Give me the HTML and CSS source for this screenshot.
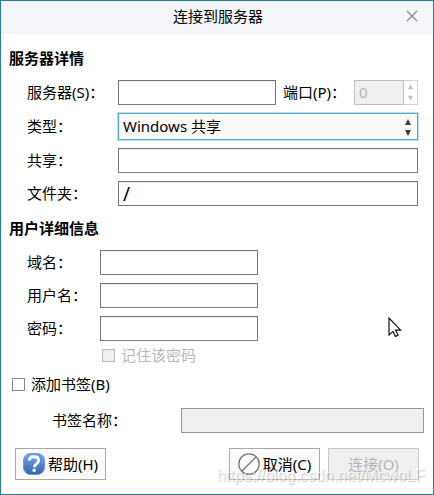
FILE: index.html
```html
<!DOCTYPE html>
<html lang="zh-CN">
<head>
    <meta charset="UTF-8">
    <meta name="viewport" content="width=device-width, initial-scale=1">
    <title>连接到服务器</title>
    <link rel="stylesheet" href="styles.css">
</head>
<body>
<form class="dialog">
    <header class="titlebar">
        <h1>连接到服务器</h1>
        <button class="close" type="button" aria-label="关闭">
            <svg width="12" height="12" viewBox="0 0 12 12"><path d="M1 1l10 10M11 1L1 11" stroke="#858585" stroke-width="1.1"/></svg>
        </button>
    </header>

    <main class="content">
        <h2>服务器详情</h2>
        <div class="fields server">
            <label for="server">服务器(S)：</label>
            <div class="server-row">
                <input class="text" id="server" type="text">
                <label for="port">端口(P)：</label>
                <div class="spin">
                    <input id="port" type="number" value="0" disabled>
                    <svg width="14" height="23" viewBox="0 0 14 23" fill="#c4c4c4"><path d="M7 3l3 5H4zM7 20l3-5H4z"/></svg>
                </div>
            </div>
            <label for="type">类型：</label>
            <div class="select">
                <select id="type">
                    <option>Windows 共享</option>
                </select>
                <svg class="arrows" width="8" height="17" viewBox="0 0 8 17" fill="#3c3c3c"><path d="M4 0l3 6H1zM4 17l3-6H1z"/></svg>
            </div>
            <label for="share">共享：</label>
            <input class="text" id="share" type="text">
            <label for="folder">文件夹：</label>
            <input class="text path" id="folder" type="text" value="/">
        </div>

        <h2>用户详细信息</h2>
        <div class="fields user">
            <label for="domain">域名：</label>
            <input class="text" id="domain" type="text">
            <label for="username">用户名：</label>
            <input class="text" id="username" type="text">
            <label for="password">密码：</label>
            <input class="text" id="password" type="password">
        </div>
        <label class="check remember"><input type="checkbox" disabled>记住该密码</label>

        <label class="check bookmark"><input type="checkbox">添加书签(B)</label>
        <div class="bookmark-name">
            <label for="bookmark">书签名称：</label>
            <input class="text" id="bookmark" type="text" disabled>
        </div>
    </main>

    <footer class="buttons">
        <button class="btn help" type="button">
            <svg width="22" height="22" viewBox="0 0 22 22">
                <defs>
                    <linearGradient id="blue" x1="0" y1="0" x2="0" y2="1">
                        <stop offset="0" stop-color="#76a5ec"/>
                        <stop offset="1" stop-color="#3467a8"/>
                    </linearGradient>
                </defs>
                <rect x=".5" y=".5" width="21" height="21" rx="7" fill="url(#blue)" stroke="#6f9ad6"/>
                <path d="M6.2 7.6C6.4 5 8.4 3.8 10.9 3.8c2.8 0 4.7 1.4 4.7 3.7 0 3.4-4.2 3.3-4.2 6.7" fill="none" stroke="#fff" stroke-width="2.9"/>
                <circle cx="11.2" cy="17.3" r="1.8" fill="#fff"/>
            </svg>
            帮助(H)
        </button>
        <button class="btn" type="button">
            <svg width="22" height="22" viewBox="0 0 22 22" fill="none" stroke="#777" stroke-width="1.3"><circle cx="11" cy="11" r="10.2"/><path d="M3.8 18.2L18.2 3.8"/></svg>
            取消(C)
        </button>
        <button class="btn" type="submit" disabled>连接(O)</button>
    </footer>

    <svg class="pointer" width="14" height="21" viewBox="0 0 14 21"><path d="M1 1v17l4-3.6 2.4 5 2.6-1.2-2.3-5h5z" fill="#fff" stroke="#111" stroke-width="1.2"/></svg>
    <span class="watermark">https://blog.csdn.net/McwoLF</span>
</form>
</body>
</html>
```
FILE: styles.css
```css
* {
    box-sizing: border-box;
}
body {
    margin: 0;
    background: #fff;
    color: #000;
}
body, input, select, button {
    font-family: "Noto Sans", "Noto Sans CJK SC", sans-serif;
    font-size: 15px;
    line-height: 22px;
}
.dialog {
    position: relative;
    min-height: 100vh;
    border: 1px solid #2a7a9b;
}

/* title bar */
.titlebar {
    display: grid;
    grid-template-columns: 44px 1fr 42px;
    align-items: center;
    height: 33px;
    background: #f4f5f8;
}
h1 {
    grid-column: 2;
    margin: 0;
    padding-bottom: 4px;
    font-size: 15px;
    font-weight: normal;
    text-align: center;
}
.close {
    display: flex;
    justify-content: center;
    padding: 2px 4px 6px;
    border: 0;
    background: none;
}

/* form */
.content {
    padding: 13px 9px 0 8px;
}
h2 {
    margin: 0 0 11px;
    font-size: 15px;
    font-weight: bold;
    line-height: 22px;
}
.fields {
    display: grid;
    gap: 8px 0;
    align-items: center;
    padding-left: 18px;
}
.fields label, .bookmark-name label {
    padding-bottom: 2px;
}
.server {
    grid-template-columns: 91px 1fr;
    margin-bottom: 11px;
    padding-right: 6px;
}
.user {
    grid-template-columns: 73px 158px;
}
.server-row {
    display: flex;
    align-items: center;
}
.server-row .text {
    flex: 1;
}
.server-row label {
    width: 78px;
    padding-left: 7px;
    white-space: nowrap;
}
.text {
    width: 100%;
    min-width: 0;
    height: 25px;
    padding: 0 4px;
    border: 1px solid #777;
    border-radius: 0;
    background: #fff;
    box-shadow: inset 0 1px #ececec;
}
.text:disabled {
    border-color: #999;
    background: #efefef;
    box-shadow: none;
}
.path {
    font-size: 19px;
}
.spin {
    display: flex;
    width: 64px;
    height: 25px;
    border: 1px solid #d2d2d2;
}
.spin input {
    width: 50px;
    margin: -1px 0 -1px -1px;
    padding: 0 4px 2px;
    border: 1px solid #c0c0c0;
    background: #efefef;
    color: #b8b8b8;
    appearance: textfield;
}
.select {
    position: relative;
}
.select select {
    display: block;
    width: 100%;
    height: 27px;
    padding: 0 4px 2px;
    border: 1px solid #4eacd0;
    border-radius: 0;
    background: #fafafa;
    box-shadow: 0 0 0 1px #b9dfec;
    color: #000;
    appearance: none;
}
.arrows {
    position: absolute;
    top: 6px;
    right: 6px;
    pointer-events: none;
}

/* check boxes */
.check {
    display: flex;
    align-items: center;
    gap: 6px;
}
.check input {
    width: 13px;
    height: 13px;
    margin: 0;
    border: 1px solid #888;
    background: #fff;
    appearance: none;
}
.check input:checked {
    background: #4eacd0;
}
.check input:disabled {
    border-color: #bbb;
    background: #efefef;
}
.remember {
    margin: 3px 0 7px;
    padding-left: 93px;
    color: #b8b8b8;
}
.bookmark {
    padding-left: 3px;
}
.bookmark-name {
    display: grid;
    grid-template-columns: 129px 1fr;
    align-items: center;
    margin-top: 13px;
    padding-left: 43px;
}

/* buttons */
.buttons {
    display: flex;
    gap: 8px;
    padding: 15px 14px 14px;
}
.btn {
    display: flex;
    align-items: center;
    justify-content: center;
    gap: 3px;
    width: 91px;
    height: 32px;
    padding: 0;
    border: 1px solid #aaa;
    background: #fafafa;
    color: #000;
    white-space: nowrap;
}
.btn:disabled {
    border-color: #c8c8c8;
    background: #efefef;
    color: #b8b8b8;
}
.help {
    margin-right: auto;
}

.pointer {
    position: absolute;
    top: 316px;
    left: 387px;
}
.watermark {
    position: absolute;
    right: 8px;
    bottom: 7px;
    color: rgba(255, 255, 255, 0.6);
    font-family: "Liberation Sans", sans-serif;
    font-size: 16px;
    text-shadow: 1px 1px 1px rgba(0, 0, 0, 0.2);
    pointer-events: none;
}
```
